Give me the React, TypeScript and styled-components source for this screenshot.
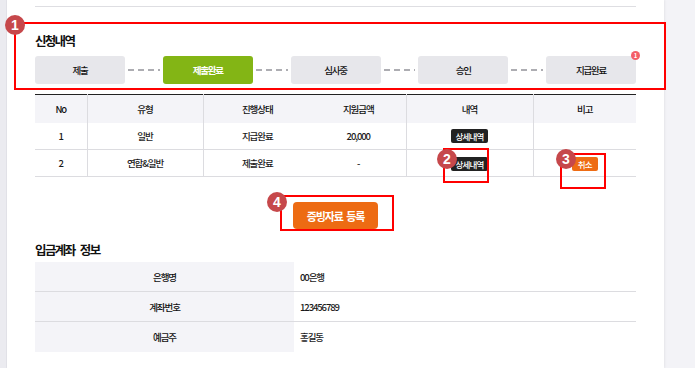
import React from "react";
import styled, { createGlobalStyle } from "styled-components";

const GlobalStyle = createGlobalStyle`
  html, body { margin: 0; padding: 0; }
  body {
    font-family: "Noto Sans CJK KR", "Noto Sans", sans-serif;
    color: #111;
    background: #f3f3f7;
  }
  * { box-sizing: border-box; }
`;

const Page = styled.div`
  position: relative;
  display: flex;
  width: 695px;
  height: 368px;
  overflow: hidden;
  background: #f3f3f7;
`;

const Gutter = styled.div`
  width: 7px;
  flex: none;
  background: #ebebf0;
  border-right: 1px solid #e2e2e8;
`;

const Panel = styled.main`
  width: 657px;
  flex: none;
  background: #fff;
  padding: 0 28px;
  box-shadow: 1px 0 2px rgba(0, 0, 0, 0.06);
  display: flex;
  flex-direction: column;
`;

const TopRule = styled.div`
  height: 7px;
  border-bottom: 1px solid #dedee2;
`;

const SectionTitle = styled.h2`
  margin: 26px 0 0;
  font-size: 12.5px;
  line-height: 16px;
  font-weight: 700;
  letter-spacing: -1.7px;
  color: #111;
`;

const Steps = styled.div`
  display: flex;
  align-items: center;
  margin-top: 7px;
  height: 28px;
`;

const StepBox = styled.div<{ $active?: boolean }>`
  position: relative;
  width: 90px;
  height: 28px;
  flex: none;
  border-radius: 3px;
  display: flex;
  align-items: center;
  justify-content: center;
  font-size: 9.5px;
  letter-spacing: -1.3px;
  font-weight: ${(p) => (p.$active ? 700 : 500)};
  background: ${(p) => (p.$active ? "#83b515" : "#e7e7eb")};
  color: ${(p) => (p.$active ? "#fff" : "#111")};
`;

const Connector = styled.div`
  flex: 1;
  height: 2px;
  margin: 0 3px;
  background: repeating-linear-gradient(to right, #adadb2 0 6px, transparent 6px 10px);
`;

const Dot = styled.span`
  position: absolute;
  top: -5px;
  right: -4px;
  width: 9px;
  height: 9px;
  border-radius: 50%;
  background: #f45f68;
  color: #fff;
  font-size: 6px;
  font-weight: 700;
  line-height: 9px;
  text-align: center;
  letter-spacing: 0;
`;

const HistoryTable = styled.table`
  margin-top: 10px;
  width: 601px;
  border-collapse: collapse;
  table-layout: fixed;
  border-top: 1px solid #222;
  font-size: 9.5px;
  letter-spacing: -1.1px;
`;

const Th = styled.th<{ $noRight?: boolean }>`
  height: 28px;
  padding: 0;
  font-weight: 500;
  color: #111;
  background: #f4f4f8;
  text-align: center;
  border-right: ${(p) => (p.$noRight ? "none" : "1px solid #dcdce0")};
  &:last-child { border-right: none; }
`;

const Td = styled.td<{ $noRight?: boolean }>`
  height: 27px;
  padding: 0;
  text-align: center;
  color: #1a1a1a;
  font-weight: 500;
  border-bottom: 1px solid #dcdce0;
  border-right: ${(p) => (p.$noRight ? "none" : "1px solid #dcdce0")};
  &:last-child { border-right: none; }
`;

const SmallButton = styled.button<{ $tone: "dark" | "orange" }>`
  height: 14px;
  padding: 0 ${(p) => (p.$tone === "dark" ? "4px" : "6px")};
  border: none;
  border-radius: 2px;
  font-family: inherit;
  font-size: 8.5px;
  font-weight: 500;
  line-height: 14px;
  letter-spacing: -0.8px;
  color: #fff;
  vertical-align: middle;
  background: ${(p) => (p.$tone === "dark" ? "#222" : "#ee6c14")};
`;

const ButtonRow = styled.div`
  display: flex;
  justify-content: center;
  margin-top: 25px;
`;

const PrimaryButton = styled.button`
  width: 85px;
  height: 27px;
  border: none;
  border-radius: 4px;
  background: #ed6b13;
  color: #fff;
  font-family: inherit;
  font-size: 11px;
  font-weight: 700;
  letter-spacing: -1.1px;
  word-spacing: 2px;
`;

const SubTitle = styled.h3`
  margin: 12px 0 0;
  font-size: 12.5px;
  line-height: 17px;
  font-weight: 700;
  letter-spacing: -1.6px;
  word-spacing: 4px;
  color: #111;
`;

const InfoTable = styled.div`
  margin-top: 4px;
  display: grid;
  grid-template-columns: 259px 1fr;
  font-size: 9.5px;
  font-weight: 500;
  letter-spacing: -1.1px;
`;

const InfoLabel = styled.div<{ $last?: boolean }>`
  height: 30px;
  display: flex;
  align-items: center;
  justify-content: center;
  background: #f4f4f8;
  color: #111;
  border-bottom: ${(p) => (p.$last ? "none" : "1px solid #dcdce0")};
`;

const InfoValue = styled.div<{ $last?: boolean }>`
  height: 30px;
  display: flex;
  align-items: center;
  padding-left: 6px;
  color: #1a1a1a;
  border-bottom: ${(p) => (p.$last ? "none" : "1px solid #dcdce0")};
`;

/* annotation overlay (callout frames + numbered markers) */
const Frame = styled.div`
  position: absolute;
  border: 2px solid #ff0000;
  pointer-events: none;
`;

const Marker = styled.span`
  position: absolute;
  width: 20px;
  height: 20px;
  margin: -10px 0 0 -10px;
  border-radius: 50%;
  background: #c6484b;
  color: #fff;
  font-family: "Liberation Sans", Arial, sans-serif;
  font-size: 14px;
  font-weight: 700;
  line-height: 20px;
  text-align: center;
`;

type Box = { x: number; y: number; w: number; h: number; n: number; mx: number; my: number };

const callouts: Box[] = [
  { n: 1, x: 14, y: 22, w: 652, h: 68, mx: 15, my: 25 },
  { n: 2, x: 443, y: 148, w: 46, h: 35, mx: 447, my: 159 },
  { n: 3, x: 560, y: 153, w: 46, h: 36, mx: 566, my: 159 },
  { n: 4, x: 280, y: 195, w: 114, h: 36, mx: 277, my: 202 },
];

const steps = ["제출", "제출완료", "심사중", "승인", "지급완료"];

const rows = [
  { no: "1", type: "일반", status: "지급완료", amount: "20,000", cancel: false },
  { no: "2", type: "연합&일반", status: "제출완료", amount: "-", cancel: true },
];

const account = [
  ["은행명", "00은행"],
  ["계좌번호", "123456789"],
  ["예금주", "홍길동"],
];

export default function App() {
  return (
    <>
      <GlobalStyle />
      <Page>
        <Gutter />
        <Panel>
          <TopRule />
          <SectionTitle>신청내역</SectionTitle>
          <Steps>
            {steps.map((s, i) => (
              <React.Fragment key={s}>
                {i > 0 && <Connector />}
                <StepBox $active={i === 1}>
                  {s}
                  {i === 4 && <Dot>1</Dot>}
                </StepBox>
              </React.Fragment>
            ))}
          </Steps>
          <HistoryTable>
            <colgroup>
              <col style={{ width: 52 }} />
              <col style={{ width: 116 }} />
              <col style={{ width: 108 }} />
              <col style={{ width: 95 }} />
              <col style={{ width: 127 }} />
              <col style={{ width: 103 }} />
            </colgroup>
            <thead>
              <tr>
                <Th>No</Th>
                <Th>유형</Th>
                <Th $noRight>진행상태</Th>
                <Th>지원금액</Th>
                <Th>내역</Th>
                <Th>비고</Th>
              </tr>
            </thead>
            <tbody>
              {rows.map((r) => (
                <tr key={r.no}>
                  <Td>{r.no}</Td>
                  <Td>{r.type}</Td>
                  <Td $noRight>{r.status}</Td>
                  <Td>{r.amount}</Td>
                  <Td>
                    <SmallButton $tone="dark">상세내역</SmallButton>
                  </Td>
                  <Td>{r.cancel && <SmallButton $tone="orange">취소</SmallButton>}</Td>
                </tr>
              ))}
            </tbody>
          </HistoryTable>
          <ButtonRow>
            <PrimaryButton>증빙자료 등록</PrimaryButton>
          </ButtonRow>
          <SubTitle>입금계좌 정보</SubTitle>
          <InfoTable>
            {account.map(([k, v], i) => (
              <React.Fragment key={k}>
                <InfoLabel $last={i === account.length - 1}>{k}</InfoLabel>
                <InfoValue $last={i === account.length - 1}>{v}</InfoValue>
              </React.Fragment>
            ))}
          </InfoTable>
        </Panel>
        {callouts.map((c) => (
          <React.Fragment key={c.n}>
            <Frame style={{ left: c.x, top: c.y, width: c.w, height: c.h }} />
            <Marker style={{ left: c.mx, top: c.my }}>{c.n}</Marker>
          </React.Fragment>
        ))}
      </Page>
    </>
  );
}
